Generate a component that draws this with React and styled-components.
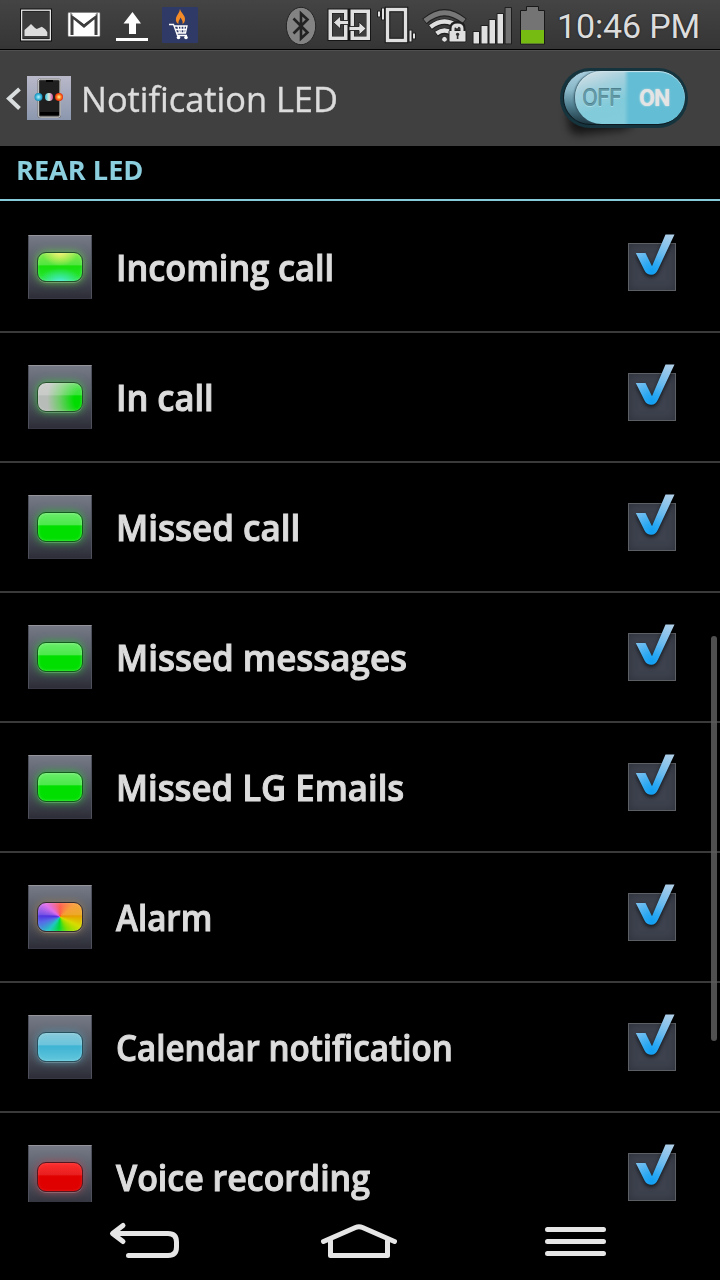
import React from 'react';
import styled, { createGlobalStyle } from 'styled-components';

const GlobalStyle = createGlobalStyle`
  * { box-sizing: border-box; }
  body { margin: 0; background: #000; }
`;

const Screen = styled.div`
  width: 720px;
  height: 1280px;
  display: flex;
  flex-direction: column;
  overflow: hidden;
  background: #000;
  color: #dcdcdc;
  font-family: 'Open Sans', 'Noto Sans', sans-serif;
`;

const StatusBar = styled.div`
  height: 50px;
  flex: none;
  display: flex;
  justify-content: space-between;
  border-bottom: 1px solid #000;
  background: linear-gradient(#444, #353535);
`;

const NoticeIcons = styled.div`
  display: flex;
  gap: 8px;
  padding-left: 16px;
`;

const SystemIcons = styled.div`
  display: flex;
  width: 436px;
`;

const StatusSvg = styled.svg`
  display: block;
  flex: none;
  height: 49px;
`;

const Clock = styled.div`
  font: 400 34px/52px Roboto, sans-serif;
  padding-left: 3px;
  letter-spacing: -0.15px;
  white-space: nowrap;
  text-shadow: 0 0 2px #111;
`;

const Header = styled.header`
  height: 96px;
  flex: none;
  display: flex;
  align-items: center;
  padding: 0 32px 0 5px;
  border-top: 1px solid #505050;
  background: #404040;
`;

const BackChevron = styled.svg`
  width: 22px;
  height: 28px;
  flex: none;
`;

const AppIcon = styled.svg`
  width: 44px;
  height: 44px;
  flex: none;
  margin-top: -1px;
`;

const Title = styled.h1`
  margin: 0 auto 0 10px;
  font: 400 35px/48px 'Open Sans', sans-serif;
  -webkit-text-stroke: 0.4px;
  transform: scaleX(${(p) => p.$fit});
  transform-origin: left;
  white-space: nowrap;
`;

const Toggle = styled.div`
  width: 128px;
  height: 60px;
  padding: 3px;
  border-radius: 30px;
  position: relative;
  z-index: 0;
  flex: none;
  margin-top: -1px;

  &::before {
    content: '';
    position: absolute;
    z-index: -2;
    left: 8px;
    top: 36px;
    width: 70px;
    height: 28px;
    border-radius: 6px 30px 60px 30px;
    background: #0c0c0c;
    filter: blur(4px);
    transform: rotate(-6deg);
    opacity: 0.8;
  }
`;

const ToggleRim = styled.div`
  position: absolute;
  inset: 0;
  border-radius: 30px;
  background: #15343e;
  z-index: -1;
`;

const Track = styled.div`
  position: relative;
  height: 54px;
  display: flex;
  justify-content: flex-end;
  border-radius: 27px;
  background: linear-gradient(#a9cede 0%, #8bb9ca 35%, #4f7f90 65%, #1d3540 100%);
  overflow: hidden;
  border: 1px solid #0d1b20;
  border-width: 0 0 1px 1px;
`;

const Thumb = styled.div`
  width: 110px;
  display: flex;
  border-radius: 27px;
  overflow: hidden;
  background: linear-gradient(90deg, transparent 49px, #63bdd4 54px),
    linear-gradient(160deg, #d3dfe5 5%, #a3d0dd 25%, #82cbda 50%, #84cddc 100%);
  box-shadow: -1px 0 2px #31525f, inset 0 1px 1px #cfe5ec;
`;

const ToggleLabel = styled.span`
  width: 55px;
  font: ${(p) => (p.$on ? 700 : 400)} 23px/55px Roboto, sans-serif;
  color: ${(p) => (p.$on ? '#e4e4e4' : '#649aa8')};
  text-shadow: ${(p) => (p.$on ? '0 0 2px #cfe3e8' : '0 -1px 0 #4d7f8c, 0 1px 0 #a5dce6')};
  padding-left: ${(p) => (p.$on ? 9 : 7)}px;
  letter-spacing: -0.8px;
`;

const SectionTitle = styled.h2`
  flex: none;
  height: 55px;
  margin: 0;
  padding-left: 16px;
  border-bottom: 2px solid #85cbd9;
  color: #8bcede;
  font: 700 27.5px/48px 'Open Sans', sans-serif;

  span {
    display: inline-block;
    transform: scaleX(0.987);
    transform-origin: left;
  }
`;

const List = styled.div`
  height: 1001px;
  flex: none;
  overflow: hidden;
  position: relative;
`;

const Row = styled.div`
  height: 130px;
  display: flex;
  align-items: center;
  padding: 0 44px 0 28px;
  border-top: 2px solid #3a3a3a;

  &:first-child { border-color: #000; }
`;

const Tile = styled.div`
  width: 64px;
  height: 64px;
  flex: none;
  padding: 16px 0 0 8px;
  border: 1px solid #4d505b;
  border-top-color: #95949b;
  border-bottom-color: #363742;
  background: linear-gradient(#747985, #5b5f6b 40%, #2c2d37);
`;

const Led = styled.div`
  width: 46px;
  height: 30px;
  border-radius: 9px;
  border: 1.5px solid ${(p) => p.$edge};
  background: linear-gradient(rgba(255, 255, 255, ${(p) => p.$gloss}), rgba(255, 255, 255, ${(p) => p.$gloss * 0.7}) 43%, transparent 46%),
    ${(p) => p.$fill};
  background-origin: border-box;
  box-shadow: 0 0 9px ${(p) => p.$glow}, 0 1px 0 rgba(255, 255, 255, 0.3),
    inset 0 0 3px rgba(255, 255, 255, ${(p) => p.$gloss});
`;

const Label = styled.div`
  margin: 2px auto 0 24px;
  font-size: 36px;
  line-height: 48px;
  font-weight: 600;
  -webkit-text-stroke: 1px;
  white-space: nowrap;
  transform: scaleX(${(p) => p.$fit});
  transform-origin: left;
`;

const Checkbox = styled.div`
  width: 48px;
  height: 48px;
  flex: none;
  border: 1px solid #5c5f63;
  background: #3d424e;
  box-shadow: inset 0 0 8px #2e323b;

  svg {
    display: block;
    margin: -1px;
    overflow: visible;
    filter: drop-shadow(0 2px 2px rgba(0, 0, 0, 0.7));
  }
`;

const ScrollThumb = styled.div`
  position: absolute;
  right: 3px;
  top: 435px;
  width: 6px;
  height: 405px;
  border-radius: 3px;
  background: rgba(94, 94, 94, 0.85);
`;

const NavBar = styled.nav`
  height: 78px;
  display: flex;
  justify-content: space-between;
  padding: 17px 112px 0 108px;

  svg {
    display: block;
    height: 42px;
    fill: none;
    stroke: #e6e6e6;
    stroke-width: 5;
    stroke-linecap: round;
    stroke-linejoin: round;
  }
`;

const rainbow =
  'conic-gradient(from 0deg at 50% 50%, #ff3a28, #f58a10 50deg, #e89c00 85deg, #d8dc00 115deg, #80e000 150deg, #00d838 185deg, #20c8c0 220deg, #5868e8 255deg, #5030e0 275deg, #d850e8 310deg, #ff3a28)';

const solidGreen = { edge: '#145a1d', glow: '#35b840', gloss: 0.42, fill: '#00df00' };

const items = [
  { name: 'Incoming call', fit: 0.952, edge: '#24502a', glow: '#62c84d', gloss: 0.3, fill: 'radial-gradient(ellipse 18px 14px at 50% 0, #f5ee38, transparent), radial-gradient(ellipse 22px 14px at 50% 100%, #45ead8, transparent), linear-gradient(#50e000, #18df0c 50%, #2de840)' },
  { name: 'In call', fit: 0.957, edge: '#24502a', glow: '#48b850', gloss: 0.3, fill: 'radial-gradient(ellipse 36px 40px at 100% 60%, #00dc00 25%, rgba(60, 215, 50, 0.6) 65%, transparent), #b8bcb8' },
  { name: 'Missed call', fit: 0.972, ...solidGreen },
  { name: 'Missed messages', fit: 0.97, ...solidGreen },
  { name: 'Missed LG Emails', fit: 0.965, ...solidGreen },
  { name: 'Alarm', fit: 0.92, edge: '#352c30', glow: '#957a55', gloss: 0.22, fill: rainbow },
  { name: 'Calendar notification', fit: 0.921, edge: '#28505d', glow: '#568fa2', gloss: 0.3, fill: 'linear-gradient(#58b4ca, #3fb4d4 50%, #65c8dc)' },
  { name: 'Voice recording', fit: 0.943, edge: '#551820', glow: '#a84c58', gloss: 0.16, fill: 'linear-gradient(#ff0808, #e00000 50%, #df0000)' },
];

const Outlined = ({ children }) => (
  <g stroke="#161616" strokeWidth="1.6" paintOrder="stroke" fill="#e0e0e0">{children}</g>
);

const NoticeArea = () => (
  <NoticeIcons>
    <StatusSvg viewBox="16 0 40 49" width="40">
      <rect x="21.5" y="10" width="29" height="30" fill="#3c3c3c" stroke="#111" strokeWidth="3" />
      <rect x="21.7" y="10.2" width="28.6" height="29.6" fill="none" stroke="#eee" strokeWidth="1.3" />
      <path d="M24.5 36V30l4.5-4 2-2 4 4 1.8 1 5-2.2 3.5 2.5 2 3V36Z" fill="#ddd" />
    </StatusSvg>
    <StatusSvg viewBox="64 0 40 49" width="40">
      <rect x="68" y="12.5" width="32" height="24" rx="1" fill="#fff" stroke="#777" strokeWidth=".6" />
      <path d="M72 35V16l12 10 12-10V35" fill="none" stroke="#3e3e3e" strokeWidth="3" />
      <path d="M71 14.5h26L84 24Z" fill="#fff" />
    </StatusSvg>
    <StatusSvg viewBox="112 0 40 49" width="40">
      <path d="M132.5 12l8.5 11.5h-5V34h-7V23.5h-5.5ZM116 38h32v3h-32Z" fill="#fff" />
    </StatusSvg>
    <StatusSvg viewBox="160 0 40 49" width="40">
      <rect x="162" y="7" width="36" height="36" rx="1" fill="#303a66" />
      <path d="M180 9c1 4 5 6 5 10 0 3-1 4-2.5 5 .5-3-.5-4-2-6.5-1 2.5-2.5 4-2 6.5-2-1-3-3-2.5-6 .5-3 3.5-5 4-9Z" fill="#f58b26" />
      <path d="M169 24.5h4.5l4 11h9.500M174.500 26H187l-1.500 7h-8.500M178 26l1.500 7M181 26v7M184 26v7M175.500 29.500h11" fill="none" stroke="#fff" strokeWidth="1.3" />
      <circle cx="178.5" cy="37.5" r="1.8" fill="#fff" /><circle cx="186" cy="37.5" r="1.8" fill="#fff" />
    </StatusSvg>
  </NoticeIcons>
);

const SystemArea = () => (
  <SystemIcons>
    <StatusSvg viewBox="284 0 38 49" width="38">
      <ellipse cx="301" cy="26" rx="14.7" ry="18.7" fill="#838383" stroke="#242424" />
      <path d="M293.500 18.500l14 14-6.500 6v-25l6.500 6-14 14" fill="none" stroke="#222" strokeWidth="2.6" />
    </StatusSvg>
    <StatusSvg viewBox="322 0 52 49" width="52">
      <path d="M327.500 8.500H371v32.500H327.500Z" fill="#161616" />
      <path fillRule="evenodd" fill="#e0e0e0" d="M328.500 9.500h19v30.500h-19ZM332 13v23.500h12V13ZM350.500 9.500h19.500v30.500h-19.500ZM354 13v23.500h12.500V13Z" />
      <path d="M332.500 13.500h11v22.500h-11ZM354.500 13.500h11.500v22.500h-11.500Z" fill="#3d3d3d" />
      <path d="M333.500 22.500l7-6.500v4.500h8v4H340.500v4.500ZM366 28.500l-7-6.500v4.500h-10v4h10v4.500Z" fill="#e0e0e0" stroke="#222" strokeWidth=".9" />
    </StatusSvg>
    <StatusSvg viewBox="374 0 45 49" width="45">
      <rect x="387.5" y="9.5" width="18" height="31" fill="none" stroke="#161616" strokeWidth="5.5" />
      <rect x="387.5" y="9.5" width="18" height="31" fill="none" stroke="#e0e0e0" strokeWidth="3.4" />
      <Outlined>
        <path d="M378 11.500h2v5h-2ZM382 8.500h2v11h-2ZM409.500 30.500h2v11h-2ZM413 33.500h2v5h-2Z" />
      </Outlined>
    </StatusSvg>
    <StatusSvg viewBox="419 0 51 49" width="51">
      <g fill="none">
        <path d="M424.500 21.500Q444.500 4 464.500 21.500" stroke="#202020" strokeWidth="7" />
        <path d="M425 21Q444.500 4.500 464 21" stroke="#777" strokeWidth="5" />
        <path d="M430 27.500Q444.500 16 459 27.500M436 34q8.500-6 17 0" stroke="#202020" strokeWidth="6.5" />
        <path d="M430.500 27Q444.500 16 458.500 27M436.500 33.500q8-6 16 0" stroke="#e0e0e0" strokeWidth="4.5" />
      </g>
      <circle cx="444.5" cy="39.3" r="2.9" fill="#e0e0e0" stroke="#202020" />
      <path d="M452 31v-3q0-4.500 5.500-4.500T463 28v3" fill="none" stroke="#202020" strokeWidth="5" />
      <rect x="449" y="30.5" width="17" height="11.5" rx="1" fill="#e0e0e0" stroke="#202020" />
      <path d="M453 32v-3.500q0-3.500 4.500-3.500t4.500 3.500V32" fill="none" stroke="#e0e0e0" strokeWidth="3" />
      <path d="M455.800 34.500a1.800 1.800 0 1 1 3.600 0l-1 1.500v3h-1.600v-3Z" fill="#333" />
    </StatusSvg>
    <StatusSvg viewBox="470 0 46 49" width="46">
      <Outlined>
        <path d="M473.500 32h5.500v11.500h-5.500ZM481.500 26h6v17.500h-6ZM489.500 20h5.500v23.500h-5.500ZM497.500 14h5.500v29.500h-5.500Z" />
        <path fill="#707070" d="M505.500 8h5.500v35.500h-5.500Z" />
      </Outlined>
    </StatusSvg>
    <StatusSvg viewBox="516 0 38 49" width="38">
      <path d="M520.500 10.500h6v-4h12v4h6V44h-24Z" fill="#747474" stroke="#191919" />
      <path d="M521 30h23v13.500h-23Z" fill="#75bb12" />
    </StatusSvg>
    <Clock>10:46 PM</Clock>
  </SystemIcons>
);

export default function App() {
  return (
    <>
      <GlobalStyle />
      <Screen>
        <StatusBar><NoticeArea /><SystemArea /></StatusBar>
        <Header>
          <BackChevron viewBox="0 0 22 28">
            <path d="M14.5 4L4 13.5l10.500 10" fill="none" stroke="#d9dddd" strokeWidth="4" />
          </BackChevron>
          <AppIcon viewBox="0 0 44 44">
            <defs>
              <linearGradient id="plate" x2="0" y2="1"><stop stopColor="#b9b9c9" /><stop offset="1" stopColor="#8b97ae" /></linearGradient>
              <radialGradient id="blue"><stop stopColor="#bdf4ff" /><stop offset=".6" stopColor="#41b9dc" /><stop offset="1" stopColor="#168db8" /></radialGradient>
              <radialGradient id="orange"><stop stopColor="#fff3a0" /><stop offset=".5" stopColor="#ff8b28" /><stop offset="1" stopColor="#e52609" /></radialGradient>
              <linearGradient id="pearl"><stop stopColor="#35bce0" /><stop offset=".5" stopColor="#d8ead8" /><stop offset="1" stopColor="#cf4aa0" /></linearGradient>
            </defs>
            <rect width="44" height="44" fill="url(#plate)" />
            <rect x="11.5" y="3.5" width="21.5" height="37.5" rx="2" fill="#1f1f20" stroke="#555" strokeWidth="2" />
            <rect x="11.3" y="3.2" width="21.9" height="38" rx="2" fill="none" stroke="#e4e4e4" strokeWidth=".9" />
            <path d="M19 4h7v2h-7ZM13 36h19v3H13Z" fill="#000" />
            <circle cx="11.5" cy="21" r="4" fill="url(#blue)" />
            <circle cx="22" cy="21" r="4" fill="url(#pearl)" />
            <circle cx="32" cy="21" r="4" fill="url(#orange)" />
          </AppIcon>
          <Title $fit={0.982}>Notification LED</Title>
          <Toggle>
            <ToggleRim />
            <Track>
              <Thumb><ToggleLabel>OFF</ToggleLabel><ToggleLabel $on>ON</ToggleLabel></Thumb>
            </Track>
          </Toggle>
        </Header>
        <SectionTitle><span>REAR LED</span></SectionTitle>
        <List>
          {items.map((item) => (
            <Row key={item.name}>
              <Tile><Led $edge={item.edge} $glow={item.glow} $gloss={item.gloss} $fill={item.fill} /></Tile>
              <Label $fit={item.fit}>{item.name}</Label>
              <Checkbox>
                <svg width="48" height="48" viewBox="0 0 48 48">
                  <defs>
                    <radialGradient id="tick" gradientUnits="userSpaceOnUse" cx="24" cy="29" r="42">
                      <stop stopColor="#119ff3" /><stop offset=".2" stopColor="#2aa8f3" /><stop offset=".5" stopColor="#6dbcef" /><stop offset="1" stopColor="#b0cfe8" />
                    </radialGradient>
                  </defs>
                  <path d="M7.8 10H17.5L24 23.200 37.500 -8.500H46.500L30 26.500Q27.600 31.800 23.300 31.800 18.800 31.800 16.500 27.500Z" fill="url(#tick)" />
                </svg>
              </Checkbox>
            </Row>
          ))}
          <ScrollThumb />
        </List>
        <NavBar>
          <svg width="74" viewBox="108 1219 74 42">
            <path d="M123 1225.500L112.500 1233.500 123 1241.500M113 1233.500H168q8.500 0 8.500 8.500v5q0 8.500-8.500 8.500H128.500" />
          </svg>
          <svg width="87" viewBox="319 1219 87 42">
            <path d="M323.500 1241.500L355.500 1227.500Q359 1226 362.500 1227.500L394.500 1241.500M330.500 1239.500V1255.500H387.500V1239.500" />
          </svg>
          <svg width="65" viewBox="543 1219 65 42">
            <path d="M547.500 1229.500H603.500M547.500 1241.500H603.500M547.500 1253.500H603.500" />
          </svg>
        </NavBar>
      </Screen>
    </>
  );
}
